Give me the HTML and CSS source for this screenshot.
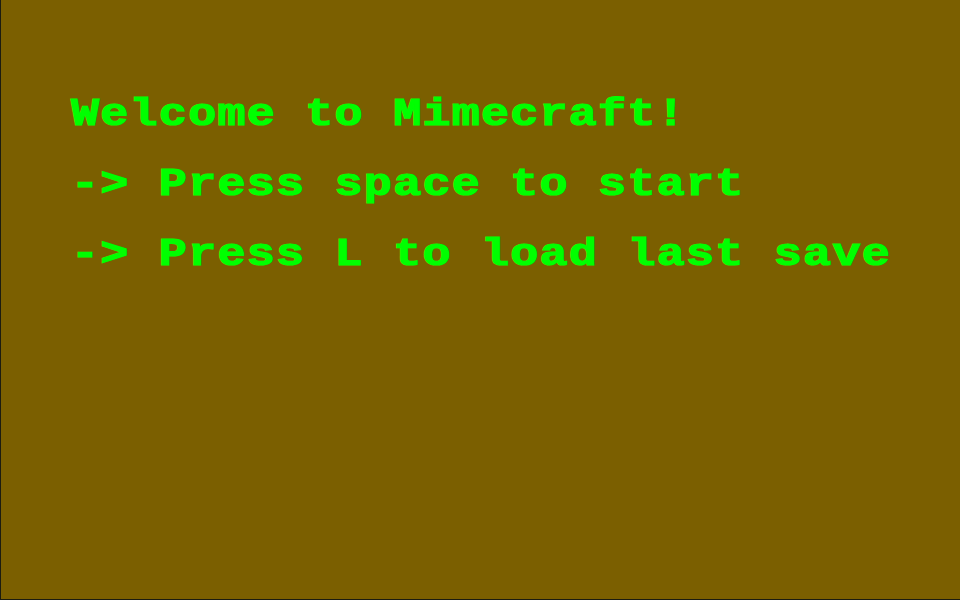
FILE: index.html
```html
<!DOCTYPE html>
<html>
<head>
<meta charset="utf-8">
<link rel="stylesheet" href="styles.css">
</head>
<body>
<main class="screen">
  <div class="menu">
    <p class="line"><span class="txt">Welcome to Mimecraft!</span></p>
    <p class="line"><span class="txt">-&gt; Press space to start</span></p>
    <p class="line"><span class="txt">-&gt; Press L to load last save</span></p>
  </div>
</main>
</body>
</html>
```
FILE: styles.css
```css
html, body {
  margin: 0;
  padding: 0;
  width: 960px;
  height: 600px;
  overflow: hidden;
}
.screen {
  box-sizing: border-box;
  width: 960px;
  height: 600px;
  background: #7b5f00;
  border-left: 1px solid #1c1c10;
  border-bottom: 1px solid #1c1c10;
  padding: 80px 0 0 70px;
}
.menu {
  display: flex;
  flex-direction: column;
}
.line {
  margin: 0;
  font-family: "Liberation Mono", monospace;
  font-weight: bold;
  font-size: 39px;
  line-height: 70px;
  letter-spacing: 1px;
  color: #00ff00;
  white-space: pre;
}
.txt {
  display: inline-block;
  transform: scaleX(1.2);
  transform-origin: left center;
  -webkit-text-stroke: 1.2px #00ff00;
}
```
